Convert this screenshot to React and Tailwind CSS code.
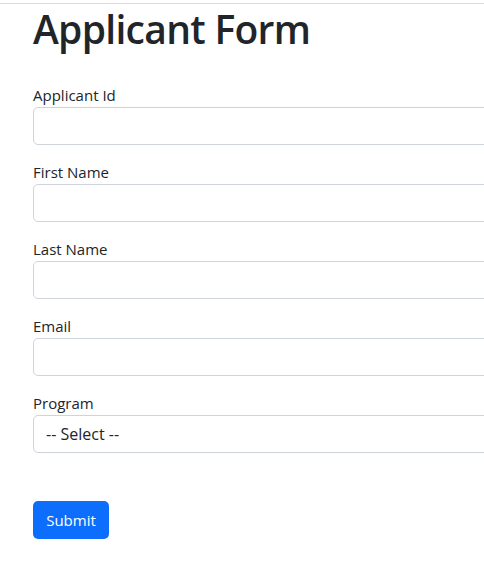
export default function App() {
  const fields = ['Applicant Id', 'First Name', 'Last Name', 'Email']

  return (
    <div className="min-h-screen w-full overflow-hidden bg-white text-[#212529]" style={{ fontFamily: '"Open Sans", "Noto Sans", sans-serif' }}>
      <div className="mt-[3px] border-t border-[#dcdcdc]" />
      <div className="pl-[33px] w-[700px]">
        <h1 className="m-0 pt-[1px] text-[39px] font-semibold leading-[47px] tracking-[-0.7px]">Applicant Form</h1>
        <form className="mt-[31px]">
          {fields.map((f) => (
            <div key={f} className="mb-[15px]">
              <label className="block text-[15px] leading-[24px]">{f}</label>
              <input type="text" className="block h-[38px] w-full rounded-[5px] border border-[#ced4da] bg-white px-3 text-base outline-none" />
            </div>
          ))}
          <div className="mb-[15px]">
            <label className="block text-[15px] leading-[24px]">Program</label>
            <div className="flex h-[38px] w-full items-center rounded-[5px] border border-[#ced4da] bg-white px-3 text-[16px]">
              -- Select --
            </div>
          </div>
          <button type="button" className="mt-[33px] h-[38px] w-[76px] rounded-[5px] bg-[#0d6efd] text-[15px] text-white">
            Submit
          </button>
        </form>
      </div>
    </div>
  )
}
